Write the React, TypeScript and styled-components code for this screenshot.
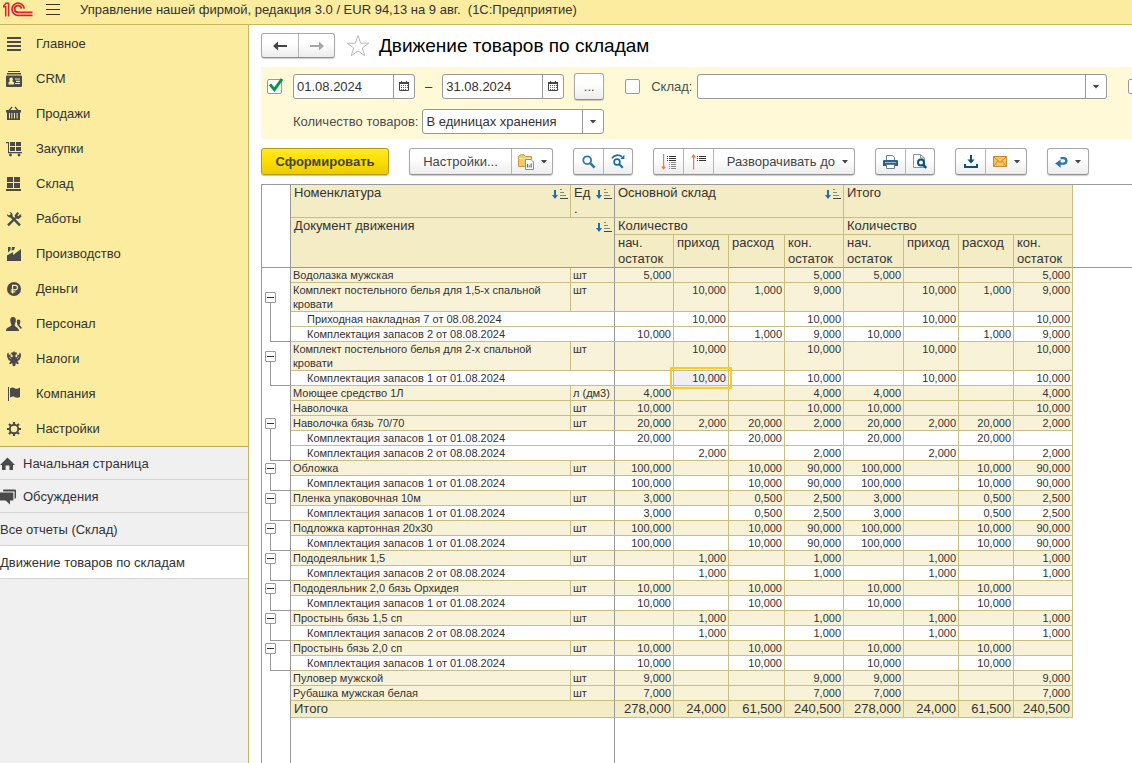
import React from 'react';
import styled, { createGlobalStyle, css } from 'styled-components';

const GlobalStyle = createGlobalStyle`
  *, *::before, *::after { box-sizing: border-box; }
  html, body { margin: 0; padding: 0; }
  body {
    font-family: "Liberation Sans", Arial, sans-serif;
    font-size: 13px;
    line-height: 16px;
    color: #333;
    background: #fff;
    overflow: hidden;
  }
  button, input, select { font: inherit; color: inherit; margin: 0; }
  a { color: inherit; text-decoration: none; }
  svg { display: block; flex: none; }
`;

const line = '#c9bd7f';
const gray = '#999';

const Page = styled.div`
  display: flex;
  flex-direction: column;
  height: 100vh;
`;

const TopBar = styled.header`
  display: flex;
  align-items: center;
  flex: none;
  height: 25px;
  padding: 0 4px 5px 3px;
  background: #fbec9f;
  border-bottom: 1px solid #c8b75f;
`;

const MenuButton = styled.button`
  display: flex;
  padding: 0;
  margin-left: 13px;
  border: 0;
  background: none;
`;

const AppTitle = styled.span`
  margin-left: 20px;
  white-space: pre;
`;

const Body = styled.div`
  display: flex;
  flex: 1;
  min-height: 0;
`;

const Sidebar = styled.aside`
  display: flex;
  flex-direction: column;
  flex: none;
  width: 249px;
  background: #f0f0f0;
  border-right: 1px solid #c8b75f;
`;

const Sections = styled.nav`
  padding-top: 1px;
  background: #fbec9f;
  border-bottom: 1px solid #b9a84e;
`;

const SectionLink = styled.a`
  display: flex;
  align-items: center;
  gap: 14px;
  height: 35px;
  padding-left: 6px;
`;

const OpenPages = styled.nav`
  display: flex;
  flex-direction: column;
`;

const PageLink = styled.a<{ $active?: boolean }>`
  display: flex;
  align-items: center;
  gap: 7px;
  height: 33px;
  padding-top: 1px;
  background: ${p => (p.$active ? '#fff' : '#f0f0f0')};
  border-bottom: 1px solid #d5d5d5;
`;

const Main = styled.main`
  display: flex;
  flex-direction: column;
  flex: 1;
  min-width: 0;
  padding: 8px 0 0 12px;
`;

const Heading = styled.div`
  display: flex;
  align-items: center;
  flex: none;
  height: 25px;
`;

const Title = styled.h1`
  margin: 0 0 0 9px;
  font-size: 19px;
  line-height: 24px;
  font-weight: 400;
  color: #000;
  white-space: nowrap;
`;

const ButtonGroup = styled.div`
  display: flex;
  flex: none;
  border: 1px solid #a8a8a8;
  border-bottom-color: #8f8f8f;
  border-radius: 3px;
  background: linear-gradient(#fff 40%, #ececec);
  box-shadow: 0 1px 1px rgba(0, 0, 0, 0.2);
`;

const ToolButton = styled.button<{ $width: number }>`
  display: flex;
  align-items: center;
  justify-content: center;
  gap: 7px;
  width: ${p => p.$width}px;
  height: 25px;
  padding: 0;
  border: 0;
  background: none;
  color: #444;
  white-space: nowrap;
  & + & { border-left: 1px solid #b5b5b5; }
`;

const LevelButton = styled(ToolButton)`
  justify-content: flex-end;
  padding-right: 6px;
  border-left: 1px solid #b5b5b5;
`;

const NavButton = styled(ToolButton)`
  height: 23px;
`;

const PrimaryButton = styled.button`
  flex: none;
  width: 128px;
  height: 27px;
  padding: 0;
  border: 1px solid #b39d00;
  border-radius: 3px;
  background: linear-gradient(#ffe92e, #ffe100 40%, #eccb00);
  box-shadow: 0 1px 1px rgba(0, 0, 0, 0.25);
  color: #444;
  font-weight: 700;
`;

const StarButton = styled.button`
  display: flex;
  margin-left: 11px;
  padding: 0;
  border: 0;
  background: none;
`;

const Filters = styled.section`
  display: flex;
  flex-direction: column;
  flex: none;
  gap: 9px;
  margin-top: 9px;
  padding: 6px 0 5px 6px;
  background: #fff9d7;
  overflow: hidden;
`;

const PeriodRow = styled.div`
  display: flex;
  align-items: center;
  height: 27px;
  margin-right: -11px;
`;

const QuantityRow = styled.div`
  display: flex;
  align-items: center;
  gap: 4px;
  padding-left: 26px;
`;

const FilterLabel = styled.label`
  color: #4d4d4d;
  white-space: nowrap;
`;

const Dash = styled.span`
  margin: 0 10px;
`;

const CheckWrap = styled.span`
  display: grid;
  flex: none;
  width: 15px;
  height: 15px;
  & > * { grid-area: 1 / 1; }
  & > svg { pointer-events: none; }
`;

const CheckInput = styled.input`
  appearance: none;
  width: 15px;
  height: 15px;
  border: 1px solid #999;
  border-radius: 2px;
  background: #fff;
`;

const DateBox = styled.div`
  display: flex;
  flex: none;
  width: 122px;
  height: 25px;
  border: 1px solid #999;
  border-radius: 3px;
  background: #fff;
`;

const DateInput = styled.input`
  flex: 1;
  min-width: 0;
  padding: 0 3px;
  border: 0;
  background: none;
  outline: 0;
`;

const CalendarButton = styled.button`
  display: flex;
  align-items: center;
  justify-content: center;
  width: 21px;
  padding: 0;
  border: 0;
  border-left: 1px solid #999;
  background: none;
`;

const SelectBox = styled.div<{ $width?: number }>`
  display: grid;
  grid-template-columns: 1fr 21px;
  flex: ${p => (p.$width ? 'none' : '1')};
  width: ${p => (p.$width ? `${p.$width}px` : 'auto')};
  height: 25px;
  border: 1px solid #999;
  border-radius: 3px;
  background: #fff;
`;

const Select = styled.select`
  grid-area: 1 / 1 / 2 / 3;
  appearance: none;
  padding: 0 24px 0 3px;
  border: 0;
  background: none;
  outline: 0;
`;

const SelectArrow = styled.span`
  grid-area: 1 / 2;
  display: flex;
  align-items: center;
  justify-content: center;
  border-left: 1px solid #999;
  pointer-events: none;
`;

const Ellipsis = styled(ButtonGroup)`
  margin: 0 21px 0 10px;
`;

const WarehouseLabel = styled(FilterLabel)`
  margin: 0 5px 0 11px;
`;

const StartCheck = styled.div`
  margin-right: 11px;
`;

const TailCheck = styled.div`
  margin-left: 21px;
`;

const Toolbar = styled.div`
  display: flex;
  flex: none;
  gap: 20px;
  margin-top: 9px;
`;

const Sheet = styled.section`
  display: flex;
  flex-direction: column;
  flex: 1;
  min-height: 0;
  margin-top: 9px;
  border-top: 1px solid ${gray};
  border-left: 1px solid ${gray};
  overflow: hidden;
`;

const Report = styled.table`
  flex: none;
  width: 100%;
  table-layout: fixed;
  border-collapse: separate;
  border-spacing: 0;
`;

const Col = styled.col<{ $width?: number }>`
  width: ${p => (p.$width ? `${p.$width}px` : 'auto')};
`;

const HeadRow = styled.tr<{ $height: number }>`
  height: ${p => p.$height}px;
`;

const HeadCell = styled.th<{ $frozen?: boolean; $last?: boolean }>`
  padding: 0 2px 0 3px;
  background: #f4ecc5;
  border-right: 1px solid ${p => (p.$frozen ? gray : line)};
  border-bottom: 1px solid ${p => (p.$last ? gray : line)};
  font-weight: 400;
  text-align: left;
  vertical-align: top;
`;

const HeadContent = styled.div`
  display: flex;
  justify-content: space-between;
  gap: 4px;
  line-break: anywhere;
  & > svg { margin-top: 4px; }
`;

const BlankHead = styled.td<{ $gutter?: boolean }>`
  padding: 0;
  border-bottom: 1px solid ${gray};
  border-right: ${p => (p.$gutter ? `1px solid ${gray}` : 'none')};
`;

type Level = 'item' | 'doc' | 'total';

const rowFill: Record<Level, string> = { item: '#f8f2d8', doc: '#fff', total: '#f4ecc5' };

const Cell = styled.td<{ $level: Level; $frozen?: boolean }>`
  padding: 0 2px;
  background: ${p => rowFill[p.$level]};
  border-right: 1px solid ${p => (p.$frozen ? gray : line)};
  border-bottom: 1px solid ${line};
  font-size: ${p => (p.$level === 'total' ? 13 : 11)}px;
  line-height: ${p => (p.$level === 'total' ? 16 : 14)}px;
  vertical-align: top;
  white-space: nowrap;
`;

const NameCell = styled(Cell)`
  padding-left: ${p => (p.$level === 'doc' ? 16 : p.$level === 'total' ? 3 : 2)}px;
  white-space: normal;
`;

const NumberCell = styled(Cell)<{ $selected?: boolean }>`
  height: ${p => (p.$level === 'total' ? 17 : 15)}px;
  text-align: right;
  ${p =>
    p.$selected &&
    css`
      position: relative;
      background: #f0f0f0;
      &::after {
        content: '';
        position: absolute;
        inset: -4px;
        border: 2px solid #fcc82a;
        pointer-events: none;
      }
    `}
`;

type Branch = 'none' | 'head' | 'middle' | 'last';

const stroke = `linear-gradient(${gray}, ${gray})`;
const branchLines: Record<Branch, string> = {
  none: 'none',
  head: `${stroke} 8px 100% / 1px 50% no-repeat`,
  middle: `${stroke} 8px 0 / 1px 100% no-repeat`,
  last: `${stroke} 8px 0 / 1px 100% no-repeat, ${stroke} 100% 100% / 20px 1px no-repeat`,
};

const Gutter = styled.td<{ $branch: Branch }>`
  padding: 0 0 0 3px;
  border-right: 1px solid ${gray};
  background: ${p => branchLines[p.$branch]};
  vertical-align: middle;
`;

const Toggle = styled.button`
  display: flex;
  align-items: center;
  justify-content: center;
  width: 11px;
  height: 11px;
  padding: 0;
  border: 1px solid ${gray};
  border-radius: 1px;
  background: #fff;
`;

const SheetTail = styled.div`
  display: grid;
  grid-template-columns: 29px 324px;
  flex: 1;
`;

const TailColumn = styled.div`
  border-right: 1px solid ${gray};
`;

/* ---------- icons ---------- */

const ink = '#4a4a4a';

const LogoIcon = () => (
  <svg width="30" height="16" viewBox="0 0 30 16" fill="none" stroke="#dc2127" strokeWidth="1.7">
    <path d="M0 4.8H2.7V14.5M2.4 1.2H5.6V14.5M0 4.6 3.2 1.2" strokeWidth="1.5" />
    <path d="M21.2 6.6A6.1 6.1 0 1 0 15 13.4H29.5" />
    <path d="M18.4 6.6A3.4 3.4 0 1 0 15 10.4H29.5" />
  </svg>
);

const BurgerIcon = () => (
  <svg width="14" height="12" viewBox="0 0 14 12" fill="#333">
    <path d="M0 0h14v1H0zM0 5h14v1H0zM0 10h14v1H0z" />
  </svg>
);

const sectionArt: Record<string, React.ReactNode> = {
  main: <path d="M1 1h14v2H1zM1 5h14v2H1zM1 9h14v2H1zM1 13h14v2H1z" />,
  crm: (
    <>
      <path d="M2 0h12v1H2zM1 2h14v1.4H1z" />
      <path
        fillRule="evenodd"
        d="M0 5.5Q0 4.5 1 4.5H15Q16 4.5 16 5.5V15Q16 16 15 16H1Q0 16 0 15ZM5 6.5a1.8 2 0 0 0-1 3.6L2.5 11.5V13.5H8V11.5L6.2 10.1A1.8 2 0 0 0 5 6.5ZM9 7.5V8.6H14V7.5ZM10 9.8V10.9H14V9.8ZM9 12V13.1H14V12Z"
      />
    </>
  ),
  basket: (
    <>
      <path d="M3 4.5 6 1M12 4.5 9 1" stroke={ink} strokeWidth="1.2" fill="none" />
      <path fillRule="evenodd" d="M0 4h15v2.4h-1V14H1V6.4H0zM3 7v5.4h1V7zM5.4 7v5.4h1V7zM8 7v5.4h1V7zM10.6 7v5.4h1V7z" />
    </>
  ),
  cart: (
    <>
      <path d="M0 1h3v10h13v1.3H2V2.2H0z" />
      <path d="M4 1h5v4H4zM10 1h5v4h-5zM4 6h5v4H4zM10 6h5v4h-5z" />
      <circle cx="4.5" cy="14" r="1.4" />
      <circle cx="13" cy="14" r="1.4" />
    </>
  ),
  boxes: <path d="M1 1h6v5H1zM8 1h6v5H8zM1 7h6v5H1zM8 7h6v5H8zM0 13h15v2H0z" />,
  tools: (
    <>
      <path d="M2 14.4 9.4 7M5 5.4 14 14.4" stroke={ink} strokeWidth="2.4" fill="none" />
      <path d="M3.3.9 4.6 2.2 4.3 4 2.5 4.3 1 2.9A3.2 3.2 0 0 0 4.8 6.4L6.6 4.7A3.3 3.3 0 0 0 3.3.9Z" />
      <path d="M8.6 4.6 11.4 1 13 2.2 11.4 4.4 12.4 5.2 14.2 3 15.6 5.4 12.6 8 9.4 7.6Z" />
    </>
  ),
  factory: (
    <>
      <path d="M1 15V9.6L7 6V9L15 3V15Z" />
      <path d="M2 1H4.6V4L2 6.6ZM6 1H9L8 4 5.6 4.6Z" />
    </>
  ),
  ruble: (
    <>
      <circle cx="8" cy="8" r="7" />
      <path d="M6.6 12.6V4.4H9.3A2.2 2.2 0 0 1 9.3 8.8H4.8M4.8 10.8H9.2" stroke="#fbec9f" strokeWidth="1.2" fill="none" />
    </>
  ),
  people: (
    <>
      <path d="M7 1C4.6 1 4 2.9 4.3 5C4.6 7 5.4 8 5.4 9.4C4 11 0 11 0 15H13C13 12 10 11 8.7 9.4C8.7 8 9.5 7 9.8 5C10.1 2.9 9.4 1 7 1Z" />
      <path d="M12.4 3.6C10.9 3.6 10.8 5 10.9 6.3C11 7.6 11.5 8.2 11.6 9.3L14.8 13 16 12C15.6 10.6 14.2 10.2 13.6 9.2C13.6 8.2 14.2 7.6 14.3 6.3C14.5 4.6 13.9 3.6 12.4 3.6Z" />
    </>
  ),
  eagle: (
    <>
      <path d="M8 0 9 1.6 10.4 1.2 11 3 9.4 4 9.4 6 11 6.2 11.6 3.2 13 4.2 13.6 1.6 15 3 14.8 6 13.4 9 11.4 10.2 13 12.6 11.2 13.2 9.8 11.8 9.4 14.4 8 15.6 6.6 14.4 6.2 11.8 4.8 13.2 3 12.6 4.6 10.2 2.6 9 1.2 6 1 3 2.4 1.6 3 4.2 4.4 3.2 5 6.2 6.6 6 6.6 4 5 3 5.6 1.2 7 1.6Z" />
      <path d="M3 5.6 5 8M13 5.6 11 8" stroke="#fbec9f" strokeWidth=".6" fill="none" />
    </>
  ),
  flag: (
    <path d="M2 1h1v14H2zM4 2.4C6 1 7.5 1.2 8.6 2.2C10 3.2 12 2.6 14 1.4V11C12 12 10 11.8 8.6 11C7 10.2 5.6 10.8 4 11.6Z" />
  ),
  gear: (
    <>
      <circle cx="8" cy="8" r="4.2" fill="none" stroke={ink} strokeWidth="1.9" />
      <path
        d="M8 1V3.4M8 12.6V15M1 8H3.4M12.6 8H15M3 3 4.8 4.8M11.2 11.2 13 13M3 13 4.8 11.2M11.2 4.8 13 3"
        stroke={ink}
        strokeWidth="2.2"
        fill="none"
      />
    </>
  ),
};

const SectionIcon = ({ name }: { name: string }) => (
  <svg width="16" height="16" viewBox="0 0 16 16" fill={ink}>
    {sectionArt[name]}
  </svg>
);

const HomeIcon = () => (
  <svg width="16" height="16" viewBox="0 0 16 16" fill={ink}>
    <path d="M7.5 1.6 15 9H13V14H9.4V9.6H5.6V14H2V9H0Z" />
  </svg>
);

const ChatIcon = () => (
  <svg width="16" height="16" viewBox="0 0 16 16" fill={ink}>
    <path d="M3.4 0.6H15Q16 .6 16 1.8V8.6Q16 9.8 14.6 9.8V2.4H3.2Q3 1 3.4 .6Z" />
    <path d="M0 3.4H12.4Q13.4 3.4 13.4 4.6V10.4Q13.4 11.6 12.4 11.6H10V15.4L5.6 11.6H0Z" />
  </svg>
);

const ArrowIcon = ({ color, flip }: { color: string; flip?: boolean }) => (
  <svg width="14" height="10" viewBox="0 0 14 10">
    <path
      d={flip ? 'M0 4H9V0.6L14 5 9 9.4V6H0Z' : 'M14 4H5V0.6L0 5 5 9.4V6H14Z'}
      fill={color}
    />
  </svg>
);

const StarIcon = () => (
  <svg width="24" height="24" viewBox="0 0 24 24" fill="#fff" stroke="#b4bac0">
    <path d="M12 1.5 14.7 9.2H22.8L16.3 14 18.8 21.8 12 17 5.2 21.8 7.7 14 1.2 9.2H9.3Z" />
  </svg>
);

const CalendarIcon = () => (
  <svg width="11" height="11" viewBox="0 0 11 11">
    <path d="M.5 2.5h9v7h-9z" fill="#fff" stroke="#444" />
    <path d="M0 1h10v2H0zM2 0h1v2H2zM7 0h1v2H7z" fill="#444" />
    <path d="M2 4h1v1H2zM4 4h1v1H4zM6 4h1v1H6zM2 6h1v1H2zM4 6h1v1H4zM6 6h1v1H6zM8 4h1v1H8zM8 6h1v1H8zM2 8h1v1H2zM4 8h1v1H4zM6 8h1v1H6z" fill="#666" />
  </svg>
);

const CaretIcon = () => (
  <svg width="6" height="4" viewBox="0 0 6 4">
    <path d="M0 0H6L3 3.4Z" fill="#444" />
  </svg>
);

const CheckIcon = () => (
  <svg width="17" height="15" viewBox="0 0 17 15" overflow="visible">
    <path d="M3 5.4 7.4 10.6 15 0" fill="none" stroke="#009846" strokeWidth="3" />
  </svg>
);

const FolderIcon = () => (
  <svg width="16" height="16" viewBox="0 0 16 16">
    <path d="M.5 12.5V2.5L2 .8H6L7.5 2.5H13.5V12.5Z" fill="#f3c868" stroke="#c99a3a" />
    <path d="M1 4.5H13" stroke="#fbe3a4" strokeWidth="1.4" />
    <path d="M7.5 5.5H13L15.5 8V15.5H7.5Z" fill="#fff" stroke="#7d93a8" />
    <path d="M9.6 13.5V10" stroke="#2e8b57" strokeWidth="1.3" />
    <path d="M11.4 13.5V11.4" stroke="#999" strokeWidth="1.3" />
    <path d="M13.2 13.5V9.4" stroke="#d9432f" strokeWidth="1.3" />
  </svg>
);

const SearchIcon = () => (
  <svg width="14" height="14" viewBox="0 0 14 14" fill="none" stroke="#2a76ad">
    <circle cx="5.2" cy="5.2" r="3.9" strokeWidth="1.8" />
    <path d="M8.2 8.2 12.6 12.6" strokeWidth="2.6" />
  </svg>
);

const FindNextIcon = () => (
  <svg width="15" height="15" viewBox="0 0 15 15" fill="none" stroke="#1f6a9f">
    <path d="M1 4.4C3 .6 8 .4 11 2.8" strokeWidth="1.8" />
    <path d="M13.4 .8V5H9.2Z" fill="#1f6a9f" stroke="none" />
    <circle cx="6" cy="8" r="2.9" strokeWidth="1.6" />
    <path d="M8 10 11.8 13.8" strokeWidth="2.2" />
  </svg>
);

const ExpandIcon = () => (
  <svg width="16" height="16" viewBox="0 0 16 16">
    <path d="M2 0H3.2V12.4H5.2L2.6 15.8 0 12.4H2Z" fill="#f5793f" />
    <path d="M6 2h1v1H6zM8 2h7v1H8zM6 4h1v1H6zM8 4h7v1H8zM6 6h1v1H6zM8 6h7v1H8z" fill="#333" />
    <path d="M8 8h1v1H8zM10 8h5v1h-5zM8 10h1v1H8zM10 10h5v1h-5zM8 12h1v1H8zM10 12h5v1h-5zM8 14h1v1H8zM10 14h5v1h-5z" fill="#888" />
  </svg>
);

const CollapseIcon = () => (
  <svg width="16" height="16" viewBox="0 0 16 16">
    <path d="M2 15.5H3.2V3.4H5.2L2.6 0 0 3.4H2Z" fill="#f5793f" />
    <path d="M6 2h1v1H6zM8 2h7v1H8zM6 4h1v1H6zM8 4h7v1H8zM6 6h1v1H6zM8 6h7v1H8z" fill="#333" />
  </svg>
);

const PrintIcon = () => (
  <svg width="15" height="14" viewBox="0 0 15 14">
    <path d="M3.5 5V.5H9.5L11.5 2.5V5" fill="#fff" stroke="#6b7f92" />
    <path d="M1 5H14Q15 5 15 6V11H0V6Q0 5 1 5Z" fill="#2d5f8b" />
    <path d="M2 7.5H13" stroke="#9db9d0" />
    <path d="M3.5 9.5H11.5V13.5H3.5Z" fill="#fff" stroke="#6b7f92" />
  </svg>
);

const PreviewIcon = () => (
  <svg width="14" height="15" viewBox="0 0 14 15">
    <path d="M.5 .5H7.5L11.5 4V13.5H.5Z" fill="#fff" stroke="#8696a5" />
    <path d="M7.5 .5V4H11.5" fill="none" stroke="#8696a5" />
    <circle cx="8" cy="8.6" r="3" fill="#fff" stroke="#0a5080" strokeWidth="2" />
    <path d="M10 10.6 13.2 14" stroke="#0a5080" strokeWidth="2.4" />
  </svg>
);

const SaveIcon = () => (
  <svg width="14" height="13" viewBox="0 0 14 13" fill="#0a5080">
    <path d="M6 0H8V4.6H10.6L7 8.6 3.4 4.6H6Z" />
    <path d="M0 9H2V11H12V9H14V13H0Z" />
  </svg>
);

const MailIcon = () => (
  <svg width="14" height="11" viewBox="0 0 14 11">
    <path d="M.5 .5H13.5V10.5H.5Z" fill="#f5c462" stroke="#c98a2b" />
    <path d="M1 1 7 6.4 13 1M1 10 5 5M13 10 9 5" fill="none" stroke="#c98a2b" />
  </svg>
);

const ReturnIcon = () => (
  <svg width="13" height="12" viewBox="0 0 13 12">
    <path d="M4.6 7.6H8.6A2.7 2.7 0 0 0 8.6 2.1H5.6" fill="none" stroke="#2a76ad" strokeWidth="2.4" />
    <path d="M5.6 3.4V11.8L.2 7.6Z" fill="#2a76ad" />
  </svg>
);

const SortIcon = () => (
  <svg width="16" height="11" viewBox="0 0 16 11">
    <path d="M2 1H4V6H6L3 10 0 6H2Z" fill="#1a6fb5" />
    <path d="M8 0h2v1H8zM8 3h4v1H8zM8 6h6v1H8z" fill="#8a8878" />
    <path d="M8 9h8v1H8z" fill="#444" />
  </svg>
);

const MinusIcon = () => (
  <svg width="7" height="1" viewBox="0 0 7 1">
    <path d="M0 0h7v1H0z" fill="#333" />
  </svg>
);

/* ---------- data ---------- */

const sections = [
  ['main', 'Главное'],
  ['crm', 'CRM'],
  ['basket', 'Продажи'],
  ['cart', 'Закупки'],
  ['boxes', 'Склад'],
  ['tools', 'Работы'],
  ['factory', 'Производство'],
  ['ruble', 'Деньги'],
  ['people', 'Персонал'],
  ['eagle', 'Налоги'],
  ['flag', 'Компания'],
  ['gear', 'Настройки'],
];

type Amounts = [string, string, string, string];
type Doc = { name: string; amounts: Amounts };
type Item = { name: string; unit: string; amounts: Amounts; docs?: Doc[] };

const doc1 = 'Комплектация запасов 1 от 01.08.2024';
const doc2 = 'Комплектация запасов 2 от 08.08.2024';

const single = (name: string, unit: string, doc: string, amounts: Amounts): Item => ({
  name,
  unit,
  amounts,
  docs: [{ name: doc, amounts }],
});

const items: Item[] = [
  { name: 'Водолазка мужская', unit: 'шт', amounts: ['5,000', '', '', '5,000'] },
  {
    name: 'Комплект постельного белья для 1,5-х спальной кровати',
    unit: 'шт',
    amounts: ['', '10,000', '1,000', '9,000'],
    docs: [
      { name: 'Приходная накладная 7 от 08.08.2024', amounts: ['', '10,000', '', '10,000'] },
      { name: doc2, amounts: ['10,000', '', '1,000', '9,000'] },
    ],
  },
  single('Комплект постельного белья для 2-х спальной кровати', 'шт', doc1, ['', '10,000', '', '10,000']),
  { name: 'Моющее средство 1Л', unit: 'л (дм3)', amounts: ['4,000', '', '', '4,000'] },
  { name: 'Наволочка', unit: 'шт', amounts: ['10,000', '', '', '10,000'] },
  {
    name: 'Наволочка бязь 70/70',
    unit: 'шт',
    amounts: ['20,000', '2,000', '20,000', '2,000'],
    docs: [
      { name: doc1, amounts: ['20,000', '', '20,000', ''] },
      { name: doc2, amounts: ['', '2,000', '', '2,000'] },
    ],
  },
  single('Обложка', 'шт', doc1, ['100,000', '', '10,000', '90,000']),
  single('Пленка упаковочная 10м', 'шт', doc1, ['3,000', '', '0,500', '2,500']),
  single('Подложка картонная 20х30', 'шт', doc1, ['100,000', '', '10,000', '90,000']),
  single('Пододеяльник 1,5', 'шт', doc2, ['', '1,000', '', '1,000']),
  single('Пододеяльник 2,0 бязь Орхидея', 'шт', doc1, ['10,000', '', '10,000', '']),
  single('Простынь бязь 1,5 сп', 'шт', doc2, ['', '1,000', '', '1,000']),
  single('Простынь бязь 2,0 сп', 'шт', doc1, ['10,000', '', '10,000', '']),
  { name: 'Пуловер мужской', unit: 'шт', amounts: ['9,000', '', '', '9,000'] },
  { name: 'Рубашка мужская белая', unit: 'шт', amounts: ['7,000', '', '', '7,000'] },
];

const totals: Amounts = ['278,000', '24,000', '61,500', '240,500'];
const measures = ['нач. остаток', 'приход', 'расход', 'кон. остаток'];
const columnWidths = [29, 280, 44, 59, 55, 56, 59, 60, 55, 55, 59];

/* ---------- parts ---------- */

const CheckBox = ({ id, label, checked }: { id: string; label?: string; checked?: boolean }) => (
  <CheckWrap>
    <CheckInput type="checkbox" id={id} aria-label={label} defaultChecked={checked} />
    {checked && <CheckIcon />}
  </CheckWrap>
);

const DateField = ({ label, value }: { label: string; value: string }) => (
  <DateBox>
    <DateInput type="text" aria-label={label} defaultValue={value} />
    <CalendarButton type="button" aria-label="Календарь">
      <CalendarIcon />
    </CalendarButton>
  </DateBox>
);

const DropDown = ({ id, option, width }: { id: string; option: string; width?: number }) => (
  <SelectBox $width={width}>
    <Select id={id}>
      <option>{option}</option>
    </Select>
    <SelectArrow>
      <CaretIcon />
    </SelectArrow>
  </SelectBox>
);

const AmountCells = ({ level, amounts, selected }: { level: Level; amounts: Amounts; selected?: number }) => (
  <>
    {[...amounts, ...amounts].map((value, i) => (
      <NumberCell key={i} $level={level} $selected={i === selected}>
        {value}
      </NumberCell>
    ))}
  </>
);

const ItemRows = ({ item, selectedColumn }: { item: Item; selectedColumn?: number }) => {
  const docs = item.docs ?? [];
  return (
    <>
      <tr>
        <Gutter $branch={docs.length ? 'head' : 'none'}>
          {docs.length > 0 && (
            <Toggle type="button" aria-label="Свернуть">
              <MinusIcon />
            </Toggle>
          )}
        </Gutter>
        <NameCell $level="item">{item.name}</NameCell>
        <Cell $level="item" $frozen>
          {item.unit}
        </Cell>
        <AmountCells level="item" amounts={item.amounts} />
      </tr>
      {docs.map((doc, i) => (
        <tr key={doc.name}>
          <Gutter $branch={i === docs.length - 1 ? 'last' : 'middle'} />
          <NameCell $level="doc" $frozen colSpan={2}>
            {doc.name}
          </NameCell>
          <AmountCells level="doc" amounts={doc.amounts} selected={selectedColumn} />
        </tr>
      ))}
    </>
  );
};

const ReportTable = () => (
  <Report>
    <colgroup>
      {columnWidths.map((w, i) => (
        <Col key={i} $width={w} />
      ))}
      <Col />
    </colgroup>
    <thead>
      <HeadRow $height={33}>
        <BlankHead rowSpan={3} $gutter />
        <HeadCell>
          <HeadContent>
            Номенклатура
            <SortIcon />
          </HeadContent>
        </HeadCell>
        <HeadCell $frozen>
          <HeadContent>
            Ед.
            <SortIcon />
          </HeadContent>
        </HeadCell>
        <HeadCell colSpan={4}>
          <HeadContent>
            Основной склад
            <SortIcon />
          </HeadContent>
        </HeadCell>
        <HeadCell colSpan={4}>Итого</HeadCell>
        <BlankHead rowSpan={3} />
      </HeadRow>
      <HeadRow $height={17}>
        <HeadCell colSpan={2} rowSpan={2} $frozen $last>
          <HeadContent>
            Документ движения
            <SortIcon />
          </HeadContent>
        </HeadCell>
        <HeadCell colSpan={4}>Количество</HeadCell>
        <HeadCell colSpan={4}>Количество</HeadCell>
      </HeadRow>
      <HeadRow $height={33}>
        {[...measures, ...measures].map((m, i) => (
          <HeadCell key={i} $last>
            {m}
          </HeadCell>
        ))}
      </HeadRow>
    </thead>
    <tbody>
      {items.map((item, i) => (
        <ItemRows key={item.name} item={item} selectedColumn={i === 2 ? 1 : undefined} />
      ))}
      <tr>
        <Gutter $branch="none" />
        <NameCell $level="total" $frozen colSpan={2}>
          Итого
        </NameCell>
        <AmountCells level="total" amounts={totals} />
      </tr>
    </tbody>
  </Report>
);

export default function App() {
  return (
    <Page>
      <GlobalStyle />
      <TopBar>
        <LogoIcon />
        <MenuButton type="button" aria-label="Меню">
          <BurgerIcon />
        </MenuButton>
        <AppTitle>{'Управление нашей фирмой, редакция 3.0 / EUR 94,13 на 9 авг.  (1С:Предприятие)'}</AppTitle>
      </TopBar>
      <Body>
        <Sidebar>
          <Sections>
            {sections.map(([icon, label]) => (
              <SectionLink href="#" key={icon}>
                <SectionIcon name={icon} />
                {label}
              </SectionLink>
            ))}
          </Sections>
          <OpenPages>
            <PageLink href="#">
              <HomeIcon />
              Начальная страница
            </PageLink>
            <PageLink href="#">
              <ChatIcon />
              Обсуждения
            </PageLink>
            <PageLink href="#">Все отчеты (Склад)</PageLink>
            <PageLink href="#" $active>
              Движение товаров по складам
            </PageLink>
          </OpenPages>
        </Sidebar>
        <Main>
          <Heading>
            <ButtonGroup>
              <NavButton type="button" $width={36} aria-label="Назад">
                <ArrowIcon color="#444" />
              </NavButton>
              <NavButton type="button" $width={36} aria-label="Вперед">
                <ArrowIcon color="#a6a6a6" flip />
              </NavButton>
            </ButtonGroup>
            <StarButton type="button" aria-label="В избранное">
              <StarIcon />
            </StarButton>
            <Title>Движение товаров по складам</Title>
          </Heading>
          <Filters>
            <PeriodRow>
              <StartCheck>
                <CheckBox id="use-period" label="Период" checked />
              </StartCheck>
              <DateField label="Начало периода" value="01.08.2024" />
              <Dash>–</Dash>
              <DateField label="Конец периода" value="31.08.2024" />
              <Ellipsis>
                <ToolButton type="button" $width={28} aria-label="Выбрать период">
                  ...
                </ToolButton>
              </Ellipsis>
              <CheckBox id="use-warehouse" label="Отбор по складу" />
              <WarehouseLabel htmlFor="warehouse">Склад:</WarehouseLabel>
              <DropDown id="warehouse" option="" />
              <TailCheck>
                <CheckBox id="use-item" label="Отбор по номенклатуре" />
              </TailCheck>
            </PeriodRow>
            <QuantityRow>
              <FilterLabel htmlFor="quantity">Количество товаров:</FilterLabel>
              <DropDown id="quantity" option="В единицах хранения" width={182} />
            </QuantityRow>
          </Filters>
          <Toolbar>
            <PrimaryButton type="button">Сформировать</PrimaryButton>
            <ButtonGroup>
              <ToolButton type="button" $width={101}>
                Настройки...
              </ToolButton>
              <ToolButton type="button" $width={41} aria-label="Варианты отчета">
                <FolderIcon />
                <CaretIcon />
              </ToolButton>
            </ButtonGroup>
            <ButtonGroup>
              <ToolButton type="button" $width={29} aria-label="Найти">
                <SearchIcon />
              </ToolButton>
              <ToolButton type="button" $width={29} aria-label="Найти далее">
                <FindNextIcon />
              </ToolButton>
            </ButtonGroup>
            <ButtonGroup>
              <ToolButton type="button" $width={29} aria-label="Развернуть все">
                <ExpandIcon />
              </ToolButton>
              <ToolButton type="button" $width={30} aria-label="Свернуть все">
                <CollapseIcon />
              </ToolButton>
              <LevelButton type="button" $width={141}>
                Разворачивать до
                <CaretIcon />
              </LevelButton>
            </ButtonGroup>
            <ButtonGroup>
              <ToolButton type="button" $width={29} aria-label="Печать">
                <PrintIcon />
              </ToolButton>
              <ToolButton type="button" $width={29} aria-label="Предварительный просмотр">
                <PreviewIcon />
              </ToolButton>
            </ButtonGroup>
            <ButtonGroup>
              <ToolButton type="button" $width={29} aria-label="Сохранить">
                <SaveIcon />
              </ToolButton>
              <ToolButton type="button" $width={41} aria-label="Отправить">
                <MailIcon />
                <CaretIcon />
              </ToolButton>
            </ButtonGroup>
            <ButtonGroup>
              <ToolButton type="button" $width={40} aria-label="Вернуться">
                <ReturnIcon />
                <CaretIcon />
              </ToolButton>
            </ButtonGroup>
          </Toolbar>
          <Sheet>
            <ReportTable />
            <SheetTail>
              <TailColumn />
              <TailColumn />
            </SheetTail>
          </Sheet>
        </Main>
      </Body>
    </Page>
  );
}
